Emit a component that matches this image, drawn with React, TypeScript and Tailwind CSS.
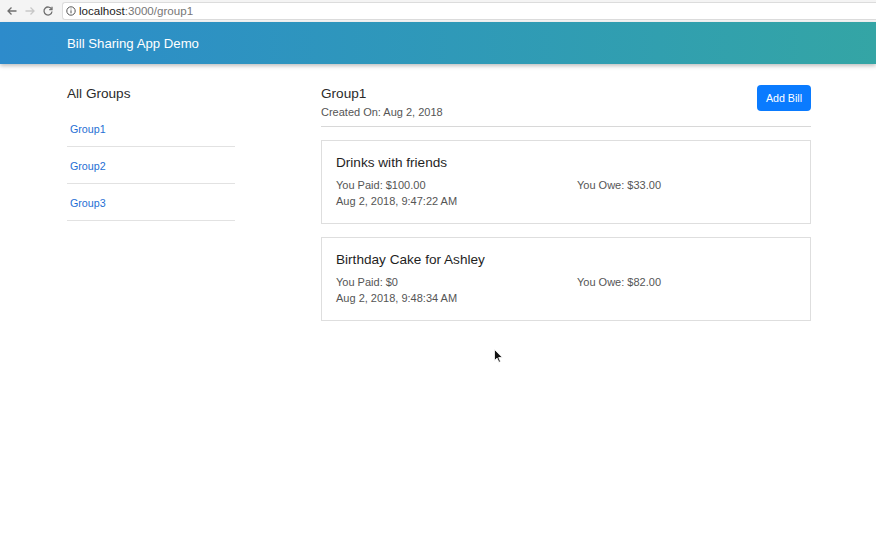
import React from "react";

interface Bill {
  title: string;
  paid: string;
  owe: string;
  date: string;
}

const bills: Bill[] = [
  { title: "Drinks with friends", paid: "$100.00", owe: "$33.00", date: "Aug 2, 2018, 9:47:22 AM" },
  { title: "Birthday Cake for Ashley", paid: "$0", owe: "$82.00", date: "Aug 2, 2018, 9:48:34 AM" },
];

const groups = ["Group1", "Group2", "Group3"];

const BrowserBar = () => (
  <div className="flex h-[22px] items-center bg-[#f4f4f4]">
    <div className="flex w-[62px] items-center gap-[6px] pl-[6px] text-[#777]">
      <svg width="12" height="12" viewBox="0 0 12 12" fill="none" stroke="#6f6f6f" strokeWidth="1.3">
        <path d="M10.5 6H2M5.5 2.5L2 6l3.5 3.5" />
      </svg>
      <svg width="12" height="12" viewBox="0 0 12 12" fill="none" stroke="#c8c8c8" strokeWidth="1.3">
        <path d="M1.5 6H10M6.5 2.5L10 6l-3.5 3.5" />
      </svg>
      <svg width="12" height="12" viewBox="0 0 12 12" fill="none" stroke="#6f6f6f" strokeWidth="1.3">
        <path d="M9.6 4.2A4 4 0 1 0 10 6.5" />
        <path d="M10 1.8v2.8H7.2" />
      </svg>
    </div>
    <div className="flex h-[18px] flex-1 items-center gap-[3px] rounded-l-[3px] border border-r-0 border-[#dcdcdc] bg-white pl-[3px] text-[11.6px] leading-none">
      <svg width="10" height="10" viewBox="0 0 10 10" fill="none" stroke="#555" strokeWidth="1">
        <circle cx="5" cy="5" r="4.2" />
        <path d="M5 4.3v3M5 2.6v.8" />
      </svg>
      <span className="text-[#222]">
        localhost<span className="text-[#777]">:3000/group1</span>
      </span>
    </div>
  </div>
);

const BillCard = ({ bill }: { bill: Bill }) => (
  <div className="mb-[13px] border border-[#dedede] px-[14px] pt-[12px] pb-[14px]">
    <h3 className="text-[13.6px] leading-5 text-[#1f1f1f]">{bill.title}</h3>
    <div className="mt-1 grid grid-cols-[241px_1fr] text-[11px] leading-4 text-[#555]">
      <span>You Paid: {bill.paid}</span>
      <span>You Owe: {bill.owe}</span>
      <span>{bill.date}</span>
    </div>
  </div>
);

export default function App() {
  return (
    <div className="relative min-h-[540px] w-full bg-white font-['Liberation_Sans',Arial,sans-serif]">
      <BrowserBar />
      <header className="relative z-10 flex h-[42px] items-center bg-gradient-to-r from-[#2d8bcb] to-[#34a5a5] px-[67px] pt-[2px] shadow-[0_2px_4px_rgba(0,0,0,0.25)]">
        <span className="text-[13.2px] text-white">Bill Sharing App Demo</span>
      </header>

      <main className="flex pt-5">
        <aside className="ml-[67px] w-[168px]">
          <h2 className="text-[13.6px] leading-5 text-[#2a2a2a]">All Groups</h2>
          <ul className="mt-[6px]">
            {groups.map((g) => (
              <li key={g} className="border-b border-[#e2e2e2] pt-[9px] pb-[7px] pl-[3px] text-[10.7px] leading-5">
                <a href="#" className="text-[#1f6fd4]">
                  {g}
                </a>
              </li>
            ))}
          </ul>
        </aside>

        <section className="ml-[86px] w-[490px]">
          <div className="flex items-start justify-between border-b border-[#d8d8d8] pb-[6px]">
            <div>
              <h2 className="text-[13.6px] leading-5 text-[#2a2a2a]">Group1</h2>
              <p className="text-[11px] leading-4 text-[#555]">Created On: Aug 2, 2018</p>
            </div>
            <button className="mt-px h-[26px] w-[54px] rounded-[4px] bg-[#0a7bff] text-[10.7px] text-white">
              Add Bill
            </button>
          </div>
          <div className="mt-[13px]">
            {bills.map((b) => (
              <BillCard key={b.title} bill={b} />
            ))}
          </div>
        </section>
      </main>

      <svg className="absolute left-[494px] top-[349px]" width="9" height="14" viewBox="0 0 9 14">
        <path d="M0.5 0.5v11l2.6-2.4 1.8 4.2 1.6-.7-1.8-4.1h3.6z" fill="#111" stroke="#fff" strokeWidth="0.8" />
      </svg>
    </div>
  );
}
